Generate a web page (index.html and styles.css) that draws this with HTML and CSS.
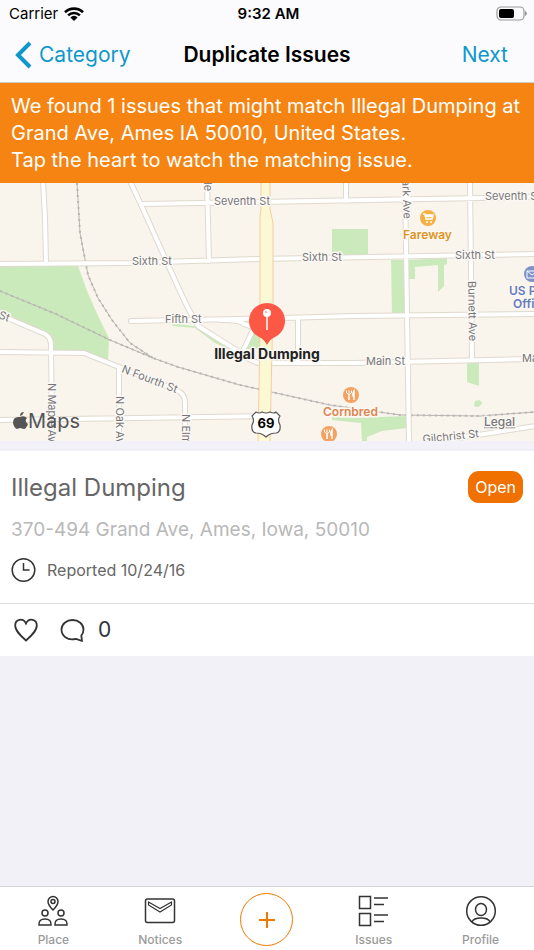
FILE: index.html
```
<!DOCTYPE html>
<html lang="en">
<head>
  <meta charset="UTF-8">
  <meta name="viewport" content="width=device-width, initial-scale=1.0">
  <title>Duplicate Issues</title>
  <link rel="stylesheet" href="styles.css">
</head>
<body>
  <header>
    <div class="status-bar">
      <div class="carrier">
        <span>Carrier</span>
        <svg width="20" height="14" viewBox="0 0 20 14">
          <path d="M1 5.2a13 13 0 0 1 18 0M4.1 8.4a8.5 8.5 0 0 1 11.8 0" fill="none" stroke="#000" stroke-width="2.6"/>
          <path d="M6.4 10.4a5 5 0 0 1 7.2 0L10 14z" fill="#000"/>
        </svg>
      </div>
      <div class="time">9:32 AM</div>
      <div class="battery">
        <svg width="32" height="16" viewBox="0 0 32 16">
          <rect x="1" y="1" width="27" height="13" rx="4" fill="none" stroke="#999" stroke-width="1.2"/>
          <rect x="3" y="3" width="15" height="9" rx="2" fill="#000"/>
          <path d="M29.5 5.5q2 2 0 4z" fill="#999" stroke="#999"/>
        </svg>
      </div>
    </div>
    <div class="nav-bar">
      <a class="back" href="#">
        <svg width="18" height="28" viewBox="0 0 18 28"><path d="M15 2L3 14l12 12" fill="none" stroke="#0f98cc" stroke-width="4"/></svg>
        <span>Category</span>
      </a>
      <h1>Duplicate Issues</h1>
      <a class="next" href="#">Next</a>
    </div>
  </header>

  <div class="banner">
    We found 1 issues that might match Illegal Dumping at Grand Ave, Ames IA 50010, United States.<br>
    Tap the heart to watch the matching issue.
  </div>

  <svg class="map" viewBox="0 0 534 258">
    <!-- parks -->
    <g class="park">
      <path d="M0 83H78L87 108 99 135 109 155 108 179 84 169H52L45 152 0 132z"/>
      <path d="M332 46h36v27h-36zM391 77h13l2 55h-14z"/>
      <path d="M409 77l38-2v6l-3 1v21l-6 6V82l-23 2v12h-6z"/>
      <path d="M172 140l28 4 41 24v4l-26-12-20-15-23-2zM253 141h8v25h-17z"/>
      <path d="M467 179h12v24l-12-4zM475 218q6-2 7 2-3 6-8 3z"/>
      <path d="M332 234l22 1 53-2v12l-25 3-15 6v4h-5l-1-18-29-3z"/>
    </g>

    <!-- railways -->
    <defs>
      <path id="tracks" d="M77 0L80 50 88 92 98 115 112 137 130 160 153 175M0 108L56 131 110 157 153 175 178 184 240 202 330 222 400 232 480 233 534 229"/>
    </defs>
    <use href="#tracks" class="rail"/>
    <use href="#tracks" class="ties"/>

    <!-- streets, edge first and white on top -->
    <defs>
      <path id="streets" d="M43 -2L45 35 46 81M-2 81L130 80 258 76 534 71M130 -2L143 26 178 104Q190 130 198 143L241 170Q250 178 259 180L354 180 536 176M142 21L258 19 536 14M207 -2L209 78M346 -2V18M405 -2L407 130 409 260M470 -2L472 177M131 138L240 136 354 133 536 131M220 137Q240 137 244 141 256 144 252 149L243 168M298 135V180M-2 131L45 151Q51 154 51 162L52 260M-2 169L84 170 119 184 178 208Q185 211 185 220V260M119 184V260M-2 237L266 233M400 264L536 243"/>
    </defs>
    <use href="#streets" class="street-edge"/>
    <use href="#streets" class="street"/>
    <path class="highway" d="M261 -2V26L260 33 260 150 258 260H270L273 120 273 40 270 26V-2z"/>

    <!-- street names -->
    <g class="street-name">
      <text x="214" y="22">Seventh St</text>
      <text x="485" y="17">Seventh St</text>
      <text x="132" y="82">Sixth St</text>
      <text x="302" y="78">Sixth St</text>
      <text x="455" y="76">Sixth St</text>
      <text x="165" y="140">Fifth St</text>
      <text x="366" y="182">Main St</text>
      <text x="522" y="179">Main St</text>
      <text transform="translate(-2 135) rotate(20)">St</text>
      <text transform="translate(121 189) rotate(21)">N Fourth St</text>
      <text transform="translate(423 260) rotate(-6)">Gilchrist St</text>
      <text transform="translate(204 -15) rotate(90)">Dale</text>
      <text transform="translate(402 -10) rotate(88)">Park Ave</text>
      <text transform="translate(468 98) rotate(89)">Burnett Ave</text>
      <text transform="translate(48 200) rotate(90)">N Maple Ave</text>
      <text transform="translate(116 213) rotate(90)">N Oak Ave</text>
      <text transform="translate(182 231) rotate(90)">N Elm Ave</text>
    </g>

    <!-- places -->
    <g class="place">
      <circle cx="428" cy="35" r="8" fill="#f5b041"/>
      <path d="M423 31h2l1 5h6l1-4h-7M425 33.500h7" fill="none" stroke="#fff" stroke-width="1.500"/>
      <path d="M427 39h.1M431 39h.1" stroke="#fff" stroke-width="2" stroke-linecap="round"/>
      <text x="403" y="56" fill="#df9424">Fareway</text>
      <circle cx="351" cy="212" r="8" fill="#f3a263"/>
      <circle cx="329" cy="251" r="8" fill="#f3a263"/>
      <g id="fork" fill="none" stroke="#fff">
        <path d="M346.500 207.500v2.500q2.500 3 5 0v-2.500M349 207.500v3"/>
        <path d="M349 211v6M354 217v-9q-1.500 2-1 5h1" stroke-width="1.500"/>
      </g>
      <use href="#fork" x="-22" y="39"/>
      <text x="323" y="233" fill="#de8550">Cornbred</text>
      <circle cx="532" cy="91" r="8" fill="#7f93c8"/>
      <path d="M527 88h10v7h-10zl5 4 5-4" fill="none" stroke="#fff"/>
      <text x="509" y="112" fill="#667cbb">US Post</text>
      <text x="513" y="125" fill="#667cbb">Office</text>
    </g>

    <!-- US 69 shield -->
    <path d="M256 229q3 2 6 0 4 2 8 0 4 2 6 0l4 4q-3 4 0 9 1 7-4 8-6 0-10 4-4-4-10-4-5-1-4-8 3-5 0-9z" fill="#fff" stroke="#555" stroke-width="1.2"/>
    <text class="shield" x="266" y="245">69</text>

    <!-- pin -->
    <path d="M267 162q-3-6-8-8a18 18 0 1 1 16 0q-5 2-8 8z" fill="#fd5746"/>
    <path d="M267 132v15" stroke="#fff" stroke-width="1.5"/>
    <circle cx="267" cy="130" r="4" fill="#fff"/>
    <circle cx="266" cy="129" r="1" fill="#fd9a8f"/>
    <text class="pin-label" x="267" y="176">Illegal Dumping</text>

    <!-- Maps logo and legal link -->
    <path d="M24 229q-1 3-4 4 0-4 4-4zM20 234q4-2 7 1-3 3 1 6-2 5-4 5l-4-1-3 1q-3-1-4-6 0-7 7-6z" fill="#555"/>
    <text class="maps" x="28" y="245">Maps</text>
    <a href="#"><text class="legal" x="484" y="243">Legal</text></a>
  </svg>

  <main>
    <div class="issue">
      <div class="issue-head">
        <h2>Illegal Dumping</h2>
        <span class="badge">Open</span>
      </div>
      <p class="address">370-494 Grand Ave, Ames, Iowa, 50010</p>
      <div class="reported">
        <svg width="26" height="26" viewBox="0 0 26 26" fill="none" stroke="#333" stroke-width="1.5"><circle cx="12.5" cy="13" r="11.3"/><path d="M12.500 6v7h6"/></svg>
        <span>Reported 10/24/16</span>
      </div>
    </div>
    <div class="actions">
      <button aria-label="Watch">
        <svg width="26" height="26" viewBox="0 0 26 26"><path d="M13 23.500C8 19 2.200 14 2.200 8.500 2.200 2 10 .5 13 6.500 16 .5 23.800 2 23.800 8.500 23.800 14 18 19 13 23.500z" fill="none" stroke="#333" stroke-width="1.8"/></svg>
      </button>
      <button aria-label="Comments">
        <svg width="26" height="26" viewBox="0 0 26 26"><path d="M23 24l-6-2.200C8 24 2.500 18.500 2.500 12.500 2.500 7 7.500 3 13.500 3s11 4 11 9.500c0 2.500-.8 4.600-2.200 6.200z" fill="none" stroke="#333" stroke-width="1.8" stroke-linejoin="round"/></svg>
        <span>0</span>
      </button>
    </div>
  </main>

  <nav class="tabs">
    <a href="#">
      <svg width="32" height="32" viewBox="0 0 32 32" fill="none" stroke="#333" stroke-width="1.5">
        <path d="M16 15q-5-5-5-8.500a5 5 0 0 1 10 0Q21 10 16 15z"/><circle cx="16" cy="6.5" r="2"/>
        <circle cx="8" cy="18" r="3"/><circle cx="24" cy="18" r="3"/>
        <path d="M2 30q-.5-6 6-6t6 6zM18 30q-.5-6 6-6t6 6z"/>
      </svg>
      <span>Place</span>
    </a>
    <a href="#">
      <svg width="32" height="32" viewBox="0 0 32 32" fill="none" stroke="#333" stroke-width="1.5">
        <rect x="1.500" y="4" width="29" height="23.500" rx="2"/>
        <path d="M4.500 7L16 13.500 27.500 7v3L16 17 4.500 10z" stroke-width="1.2"/>
      </svg>
      <span>Notices</span>
    </a>
    <button class="add" aria-label="Add issue">
      <svg width="18" height="18" viewBox="0 0 18 18"><path d="M9 1v16M1 9h16" stroke="#f07800" stroke-width="2"/></svg>
    </button>
    <a href="#">
      <svg width="32" height="32" viewBox="0 0 32 32" fill="none" stroke="#333" stroke-width="1.5">
        <path d="M1.500 1.500h11v12h-11zM1.500 18.500h11v12h-11zM16 3h14M16 9.500h10M16 20h14M16 26.500h10"/>
      </svg>
      <span>Issues</span>
    </a>
    <a href="#">
      <svg width="32" height="32" viewBox="0 0 32 32" fill="none" stroke="#333" stroke-width="1.5">
        <circle cx="16" cy="16" r="14.3"/><ellipse cx="16" cy="14.5" rx="5.500" ry="6"/>
        <path d="M7 27q1.500-4 9-4t9 4"/>
      </svg>
      <span>Profile</span>
    </a>
  </nav>
</body>
</html>
```
FILE: styles.css
```
* {
  box-sizing: border-box;
}

body {
  margin: 0;
  min-height: 100vh;
  display: flex;
  flex-direction: column;
  font-family: Inter, "Liberation Sans", sans-serif;
  background-color: #f1f1f7;
  color: #000;
}

a {
  text-decoration: none;
}

button {
  background: none;
  border: none;
  padding: 0;
  font-family: inherit;
  cursor: pointer;
}

header {
  background-color: #fbfbfd;
  border-bottom: 1px solid #d0cccc;
}

.status-bar, .nav-bar {
  display: grid;
  grid-template-columns: 1fr auto 1fr;
  align-items: center;
}

.status-bar {
  height: 27px;
  padding: 0 6px 0 9px;
  font-size: 15px;
}

.carrier {
  display: flex;
  align-items: center;
  gap: 6px;
}

.time {
  font-weight: 600;
}

.battery {
  display: flex;
  justify-content: flex-end;
}

.nav-bar {
  height: 55px;
  padding: 0 15px;
  font-size: 21px;
}

.nav-bar a {
  color: #0f98cc;
}

.nav-bar h1 {
  margin: 0;
  font-size: 21px;
  font-weight: 600;
}

.back {
  display: flex;
  align-items: center;
  gap: 6px;
}

.next {
  padding-right: 11px;
  text-align: right;
}

.banner {
  padding: 10px 11px 9px;
  background-color: #f58412;
  color: #fff;
  font-size: 20px;
  line-height: 27px;
}

/* Map */
.map {
  display: block;
  width: 100%;
  background-color: #f9f4ec;
}

.park {
  fill: #cbeabb;
}

.rail, .ties {
  fill: none;
  stroke: #b9b7b3;
}

.ties {
  stroke-width: 2;
  stroke-dasharray: 2 4;
}

.street-edge, .street {
  fill: none;
  stroke: #e0d9cf;
  stroke-width: 6;
  stroke-linejoin: round;
  stroke-linecap: round;
}

.street {
  stroke: #fff;
  stroke-width: 4;
}

.highway {
  fill: #fcf8d4;
  stroke: #f5cda0;
}

.map text {
  paint-order: stroke;
  stroke: #fbf8f3;
  stroke-width: 3px;
  stroke-linejoin: round;
}

.street-name {
  font-size: 11px;
  fill: #77777a;
}

.place {
  font-size: 12px;
  font-weight: 600;
}

.map .shield {
  font-size: 13px;
  font-weight: 700;
  text-anchor: middle;
  stroke: none;
}

.pin-label {
  font-size: 14px;
  font-weight: 700;
  text-anchor: middle;
  fill: #222;
}

.map .maps {
  font-size: 20px;
  fill: #555;
  stroke: none;
}

.legal {
  font-size: 12px;
  font-weight: 500;
  fill: #77777a;
  text-decoration: underline;
}

/* Issue card */
main {
  margin-top: 10px;
  background-color: #fff;
}

.issue {
  padding: 20px 11px;
  border-bottom: 1px solid #dedede;
}

.issue-head {
  display: flex;
  align-items: center;
  justify-content: space-between;
}

.issue h2 {
  margin: 0;
  font-size: 24px;
  font-weight: 400;
  color: #666;
}

.badge {
  padding: 0 7px;
  border-radius: 11px;
  background-color: #f07000;
  color: #fff;
  font-size: 16px;
  line-height: 32px;
}

.address {
  margin: 14px 0;
  font-size: 19px;
  line-height: 26px;
  color: #b8b8b8;
}

.reported {
  display: flex;
  align-items: center;
  gap: 10px;
  font-size: 16px;
  color: #666;
}

.actions {
  display: flex;
  gap: 20px;
  padding: 13px;
}

.actions button {
  display: flex;
  align-items: center;
  gap: 13px;
  font-size: 21px;
  line-height: 26px;
  color: #333;
}

/* Tab bar */
.tabs {
  display: grid;
  grid-template-columns: repeat(5, 1fr);
  justify-items: center;
  margin-top: auto;
  height: 64px;
  padding-top: 6px;
  background-color: #fff;
  border-top: 1px solid #d5d5d9;
}

.tabs a {
  display: flex;
  flex-direction: column;
  align-items: center;
  gap: 5px;
  padding-top: 2px;
  font-size: 12px;
  font-weight: 500;
  color: #9a9a9a;
}

.add {
  display: flex;
  align-items: center;
  justify-content: center;
  width: 53px;
  height: 53px;
  border: 1px solid #f07800;
  border-radius: 50%;
}
```
